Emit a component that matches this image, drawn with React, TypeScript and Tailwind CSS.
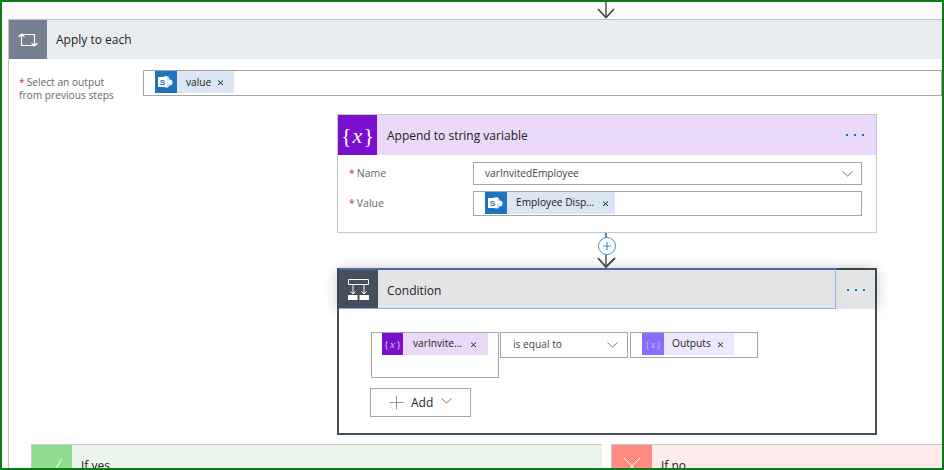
const FONT = "font-['Open_Sans',sans-serif]";

function SharePointIcon() {
  return (
    <div className="flex h-[22px] w-[22px] shrink-0 items-center justify-center bg-[#1e73be]">
      <svg width="18" height="14" viewBox="0 0 18 14">
        <circle cx="9" cy="4.5" r="3.4" fill="#cfe2f3" />
        <circle cx="12.5" cy="7.5" r="3" fill="#ffffff" />
        <circle cx="9.5" cy="10" r="2.8" fill="#cfe2f3" />
        <rect x="1" y="2" width="9" height="10" fill="#ffffff" />
        <text x="5.5" y="10" fontSize="8" fontWeight="700" textAnchor="middle" fill="#1e73be" fontFamily="Liberation Sans">S</text>
      </svg>
    </div>
  );
}

function VarIcon({ color, size, text }: { color: string; size: string; text: string }) {
  return (
    <div className={`flex shrink-0 items-center justify-center font-['Liberation_Serif',serif] font-light ${color} ${size} ${text}`}>
      <span>{"{"}</span>
      <span className="mx-[1px] italic">x</span>
      <span>{"}"}</span>
    </div>
  );
}

function CloseX() {
  return (
    <svg width="7" height="7" viewBox="0 0 7 7" className="shrink-0">
      <path d="M1 1.5 L6 6 M6 1.5 L1 6" stroke="#222" strokeWidth="1" fill="none" />
    </svg>
  );
}

function Chevron() {
  return (
    <svg width="11" height="6" viewBox="0 0 11 6" className="shrink-0">
      <path d="M0.5 0.5 L5.5 5 L10.5 0.5" stroke="#777" strokeWidth="1" fill="none" />
    </svg>
  );
}

function Dots() {
  return (
    <div className="flex w-[18px] items-center justify-between">
      <span className="h-[2px] w-[2px] bg-[#0078d4]" />
      <span className="h-[2px] w-[2px] bg-[#0078d4]" />
      <span className="h-[2px] w-[2px] bg-[#0078d4]" />
    </div>
  );
}

function Required() {
  return <span className="mr-[2px] text-[#c0392b]">*</span>;
}

function Label({ text }: { text: string }) {
  return (
    <div className="w-[135px] pl-[11px] text-[10.5px] leading-[13px] text-[#666]">
      <Required />
      {text}
    </div>
  );
}

function Branch({ label, iconBg, bg, width, mark }: { label: string; iconBg: string; bg: string; width: string; mark: string }) {
  return (
    <div className={`flex h-[40px] border-l border-t border-[#c8c8c8] ${bg} ${width}`}>
      <div className={`flex h-[40px] w-[40px] shrink-0 items-start justify-center pt-[12px] ${iconBg}`}>
        <svg width="20" height="22" viewBox="0 0 20 22">
          <path d={mark} stroke="#fff" strokeWidth="1" fill="none" />
        </svg>
      </div>
      <div className="pl-[9px] pt-[13px] text-[12px] leading-[16px] text-[#222]">{label}</div>
    </div>
  );
}

export default function App() {
  return (
    <div className={`flex h-[470px] w-[944px] flex-col overflow-hidden border-2 border-[#0a7d12] bg-[#fafafa] ${FONT}`}>
      <div className="h-[17px] shrink-0 pl-[595px]">
        <svg width="20" height="17" viewBox="0 0 20 17">
          <path d="M9 0 V15" stroke="#555" strokeWidth="1.5" fill="none" />
          <path d="M1 7 L9 15.5 L17 7" stroke="#444" strokeWidth="1.6" fill="none" />
        </svg>
      </div>

      <div className="ml-[6px] min-h-0 flex-1 overflow-hidden border-l border-t border-[#c4c4c4] bg-white">
        <div className="flex h-[39px] items-center bg-[#e9ecef]">
          <div className="flex h-[39px] w-[38px] items-center justify-center bg-[#757f8f]">
            <svg width="20" height="14" viewBox="0 0 20 14">
              <path d="M3.5 13 V1 M0.5 4 L3.5 1 L6.5 4 M3.5 1.5 H16.5 V12.5 M13.5 10 L16.5 13 L19.5 10 M3.5 12.5 H16" stroke="#fff" strokeWidth="1.2" fill="none" />
            </svg>
          </div>
          <div className="pl-[9px] text-[12px] text-[#222]">Apply to each</div>
        </div>

        <div className="mt-[11px] flex items-start">
          <div className="w-[134px] pl-[10px] pt-[6px] text-[10.2px] leading-[13px] text-[#666]">
            <div>
              <Required />
              Select an output
            </div>
            <div>from previous steps</div>
          </div>
          <div className="flex h-[26px] flex-1 border border-[#a6a6a6] pl-[11px]">
            <div className="flex h-[22px] w-[79px] items-center bg-[#dae6f3]">
              <SharePointIcon />
              <span className="pl-[9px] pr-[6px] pt-[1px] text-[10.2px] text-[#222]">value</span>
              <CloseX />
            </div>
          </div>
        </div>

        <div className="ml-[328px] mt-[12px] w-[540px]">
          <div className="h-[119px] border border-[#c8c8c8]">
            <div className="flex h-[40px] items-center bg-[#ead9f8]">
              <VarIcon color="bg-[#7a0fd0]" size="h-[40px] w-[39px]" text="text-[22px] text-white" />
              <div className="flex-1 pl-[10px] pt-[1px] text-[12px] text-[#222]">Append to string variable</div>
              <div className="pr-[12px]"><Dots /></div>
            </div>
            <div className="pt-[7px]">
              <div className="flex h-[23px] items-center">
                <Label text="Name" />
                <div className="flex h-[23px] w-[389px] items-center justify-between border border-[#a6a6a6] pl-[11px] pr-[8px] text-[10.2px] text-[#444]">
                  <span className="pt-[1px]">varInvitedEmployee</span>
                  <Chevron />
                </div>
              </div>
              <div className="mt-[6px] flex h-[25px] items-center">
                <Label text="Value" />
                <div className="flex h-[25px] w-[389px] border border-[#a6a6a6] pl-[11px]">
                  <div className="flex h-[22px] w-[130px] items-center bg-[#dae6f3]">
                    <SharePointIcon />
                    <span className="pl-[9px] pr-[8px] text-[10.2px] text-[#222]">Employee Disp...</span>
                    <CloseX />
                  </div>
                </div>
              </div>
            </div>
          </div>

          <div className="h-[35px] pl-[260px]">
            <svg width="22" height="35" viewBox="0 0 22 35">
              <path d="M9 0 V5 M9 22 V34" stroke="#555" strokeWidth="1.5" fill="none" />
              <circle cx="10" cy="13" r="8.5" fill="#fff" stroke="#3a96dd" strokeWidth="1" />
              <path d="M6 13 H14 M10 9 V17" stroke="#3a96dd" strokeWidth="1.2" fill="none" />
              <path d="M1 25 L9 34 L18 25" stroke="#444" strokeWidth="1.8" fill="none" />
            </svg>
          </div>

          <div className="h-[167px] border-2 border-[#454f5b]">
            <div className="flex h-[39px] bg-[#e3e4e6] shadow-[0_0_14px_rgba(0,0,0,0.3)]">
              <div className="-mt-[2px] flex h-[41px] flex-1 items-center border-b border-r border-t-2 border-b-[#8ab4f0] border-r-[#8ab4f0] border-t-[#4a6ca8]">
                <div className="flex h-[38px] w-[39px] items-center justify-center bg-[#454f5b]">
                  <svg width="21" height="21" viewBox="0 0 21 21">
                    <path d="M0.5 0.5 H20.5 V5.5 H0.5 Z M5 5.5 V15 M2.5 12.5 L5 15 L7.5 12.5 M16 5.5 V15 M13.5 12.5 L16 15 L18.5 12.5" stroke="#fff" strokeWidth="1" fill="none" />
                    <rect x="0" y="16" width="9.5" height="5" fill="#fff" />
                    <rect x="11.5" y="16" width="9.5" height="5" fill="#fff" />
                  </svg>
                </div>
                <div className="pl-[9px] pt-[3px] text-[12px] text-[#222]">Condition</div>
              </div>
              <div className="flex w-[39px] items-center justify-center"><Dots /></div>
            </div>

            <div className="relative h-[124px] bg-white pl-[32px] pt-[23px]">
              <div className="flex items-start">
                <div className="h-[46px] w-[128px] border border-[#a6a6a6] pl-[10px]">
                  <div className="flex h-[22px] w-[106px] items-center bg-[#ead9f8]">
                    <VarIcon color="bg-[#7a0fd0]" size="h-[22px] w-[21px]" text="text-[11px] text-[#d9c2f0]" />
                    <span className="pl-[10px] pr-[8px] text-[10.2px] text-[#222]">varInvite...</span>
                    <CloseX />
                  </div>
                </div>
                <div className="ml-[1px] flex h-[26px] w-[128px] items-center justify-between border border-[#a6a6a6] pl-[12px] pr-[9px] text-[10.2px] text-[#444]">
                  <span>is equal to</span>
                  <Chevron />
                </div>
                <div className="ml-[2px] h-[26px] w-[128px] border border-[#a6a6a6] pl-[11px]">
                  <div className="flex h-[22px] w-[92px] items-center bg-[#ede8fd]">
                    <VarIcon color="bg-[#8c6cff]" size="h-[22px] w-[22px]" text="text-[10px] text-[#c9bcff]" />
                    <span className="pl-[8px] pr-[6px] text-[10.2px] text-[#222]">Outputs</span>
                    <CloseX />
                  </div>
                </div>
              </div>
              <div className="-ml-[1px] mt-[10px] flex h-[29px] w-[101px] items-center border border-[#a6a6a6] pl-[18px]">
                <svg width="15" height="15" viewBox="0 0 15 15" className="shrink-0">
                  <path d="M0.5 7.5 H14.5 M7.5 0.5 V14.5" stroke="#8a93a0" strokeWidth="1" fill="none" />
                </svg>
                <span className="pl-[7px] pr-[8px] text-[12px] text-[#222]">Add</span>
                <div className="-mt-[4px]"><Chevron /></div>
              </div>
            </div>
          </div>
        </div>

        <div className="mt-[9px] flex pl-[22px]">
          <Branch label="If yes" iconBg="bg-[#8fdb8f]" bg="bg-[#ebf5ec]" width="w-[571px]" mark="M1 13 L8 20 L20 2" />
          <div className="w-[9px]" />
          <Branch label="If no" iconBg="bg-[#ff8a82]" bg="bg-[#fdeaea]" width="flex-1" mark="M2 1 L18 17 M18 1 L2 17" />
        </div>
      </div>
    </div>
  );
}
